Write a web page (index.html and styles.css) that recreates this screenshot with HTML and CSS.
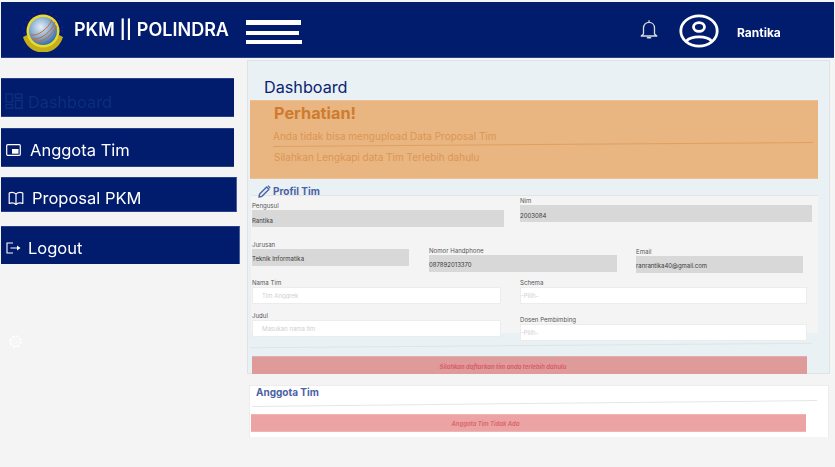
FILE: index.html
```html
<!DOCTYPE html>
<html lang="id">
<head>
<meta charset="utf-8">
<title>PKM Polindra</title>
<link rel="stylesheet" href="styles.css">
</head>
<body>
<header class="topbar">
  <svg class="logo" viewBox="0 0 42 42" aria-hidden="true">
    <defs>
      <radialGradient id="globe" cx="0.42" cy="0.36" r="0.68">
        <stop offset="0" stop-color="#e6eef6"/>
        <stop offset="0.5" stop-color="#8fb2d6"/>
        <stop offset="1" stop-color="#2f66a8"/>
      </radialGradient>
    </defs>
    <circle cx="21" cy="20" r="19" fill="#07176a" stroke="#0a1f86" stroke-width="2" stroke-dasharray="3 3"/>
    <path d="M1 27 L5 25 C10 36 32 36 37 25 L41 27 C38 37 30 42.500 21 42.500 C12 42.500 4 37 1 27 Z" fill="#c4ae1e"/>
    <circle cx="21" cy="21" r="16.500" fill="#e8dc2a"/>
    <circle cx="21" cy="21" r="14" fill="url(#globe)"/>
    <path d="M10 29 C18 30 29 23 33 12 M13 32 C21 32 31 25 34.500 16 M9 25 C16 26 25 20 30 10" fill="none" stroke="#c96a2c" stroke-width="1"/>
  </svg>
  <span class="brand">PKM || POLINDRA</span>
  <div class="burger" aria-hidden="true"><i class="b1"></i><i class="b2"></i><i class="b3"></i></div>
  <svg class="bell" viewBox="0 0 18 21" aria-hidden="true">
    <path d="M9 1.200 V3 M3.500 15 V9 C3.500 5.600 6 3.300 9 3.300 C12 3.300 14.500 5.600 14.500 9 V15 L16.800 17 H1.200 Z" fill="none" stroke="#dcdcdc" stroke-width="1.300" stroke-linejoin="round"/>
    <path d="M7.500 18.800 H10.500" stroke="#dcdcdc" stroke-width="1.600" stroke-linecap="round"/>
  </svg>
  <svg class="avatar" viewBox="0 0 40 34" aria-hidden="true">
    <ellipse cx="20" cy="17" rx="18.200" ry="15.200" fill="none" stroke="#fff" stroke-width="2.800"/>
    <ellipse cx="20" cy="13" rx="5.500" ry="4.300" fill="none" stroke="#fff" stroke-width="2.800"/>
    <path d="M7.500 27 C12 21.500 28 21.500 32.500 27" fill="none" stroke="#fff" stroke-width="2.800"/>
  </svg>
  <span class="username">Rantika</span>
</header>

<div class="layout">
  <aside class="sidebar">
    <a class="nav nav-dash">
      <svg class="ico-dash" viewBox="0 0 18 16" aria-hidden="true">
        <g fill="none" stroke="#0b2f7b" stroke-width="1.500">
          <rect x="1" y="1" width="6.500" height="8"/><rect x="10.500" y="1" width="6.500" height="4"/>
          <rect x="1" y="11.500" width="6.500" height="3.800"/><rect x="10.500" y="7.500" width="6.500" height="7.800"/>
        </g>
      </svg>
      <span class="dash-label">Dashboard</span>
    </a>
    <a class="nav nav-team">
      <svg class="ico-team" viewBox="0 0 15 12" aria-hidden="true">
        <rect x="0.700" y="0.700" width="13.600" height="10.600" rx="1" fill="none" stroke="#fff" stroke-width="1.200"/>
        <rect x="6" y="5" width="6.500" height="4.700" fill="#fff"/>
      </svg>
      <span>Anggota Tim</span>
    </a>
    <a class="nav nav-prop">
      <svg class="ico-prop" viewBox="0 0 16 14" aria-hidden="true">
        <path d="M8 2.500 C6 .8 3 .8 1.200 1.500 V12 C3 11.300 6 11.300 8 13 C10 11.300 13 11.300 14.800 12 V1.500 C13 .8 10 .8 8 2.500 Z M8 2.500 V13" fill="none" stroke="#fff" stroke-width="1.200" stroke-linejoin="round"/>
      </svg>
      <span>Proposal PKM</span>
    </a>
    <a class="nav nav-out">
      <svg class="ico-out" viewBox="0 0 15 12" aria-hidden="true">
        <path d="M7 1 H1 V11 H7 M4.500 6 H12.500" fill="none" stroke="#fff" stroke-width="1.100"/>
        <path d="M11 3.500 L14.500 6 L11 8.500 Z" fill="#fff"/>
      </svg>
      <span>Logout</span>
    </a>
    <svg class="ico-gear" viewBox="0 0 24 24" aria-hidden="true">
      <circle cx="12" cy="12" r="8.500" fill="none" stroke="#fff" stroke-width="1.800"/>
      <circle cx="12" cy="12" r="10.500" fill="none" stroke="#fff" stroke-width="2.500" stroke-dasharray="4 4.250"/>
      <circle cx="12" cy="12" r="3.500" fill="none" stroke="#fff" stroke-width="1.500"/>
    </svg>
  </aside>

  <main class="content">
    <section class="panel">
      <h1 class="page-title">Dashboard</h1>
      <div class="alert">
        <h2 class="alert-title">Perhatian!</h2>
        <p class="alert-line first">Anda tidak bisa mengupload Data Proposal Tim</p>
        <hr class="alert-rule">
        <p class="alert-line second">Silahkan Lengkapi data Tim Terlebih dahulu</p>
      </div>
      <div class="profile-head">
        <svg class="ico-pen" viewBox="0 0 14 14" aria-hidden="true">
          <path d="M1 13 L1.800 9.700 L9.300 2.200 L11.800 4.700 L4.300 12.200 Z" fill="none" stroke="#4a62a6" stroke-width="1.500" stroke-linejoin="round"/>
          <path d="M10.300 1.200 L11.300 .4 L13.600 2.700 L12.800 3.700 Z" fill="#4a62a6"/>
        </svg>
        <h3 class="section-title">Profil Tim</h3>
      </div>
      <form class="form">
        <div class="row row-1">
          <div class="field f-pengusul"><label class="lbl">Pengusul</label><div class="val val-up">Rantika</div></div>
          <div class="field f-nim"><label class="lbl">Nim</label><div class="val val-up">2003084</div></div>
        </div>
        <div class="row row-2">
          <div class="field f-jurusan"><label class="lbl">Jurusan</label><div class="val">Teknik Informatika</div></div>
          <div class="field f-hp"><label class="lbl">Nomor Handphone</label><div class="val">087892013370</div></div>
          <div class="field f-email"><label class="lbl">Email</label><div class="val">ranrantika40@gmail.com</div></div>
        </div>
        <div class="row row-3">
          <div class="field f-left"><label class="lbl">Nama Tim</label><input class="inp" placeholder="Tim Anggrek"></div>
          <div class="field f-right"><label class="lbl">Schema</label><input class="inp inp-sel" placeholder="-Pilih-"></div>
        </div>
        <div class="row row-4">
          <div class="field f-left"><label class="lbl">Judul</label><input class="inp" placeholder="Masukan nama tim"></div>
          <div class="field f-right f-dosen"><label class="lbl">Dosen Pembimbing</label><input class="inp inp-sel" placeholder="-Pilih-"></div>
        </div>
      </form>
      <hr class="form-rule">
      <div class="warn warn-form">Silahkan daftarkan tim anda terlebih dahulu</div>
    </section>

    <section class="members">
      <h3 class="section-title members-title">Anggota Tim</h3>
      <hr class="members-rule">
      <div class="warn warn-members">Anggota Tim Tidak Ada</div>
    </section>
  </main>
</div>
</body>
</html>
```

FILE: styles.css
```css
* { box-sizing: border-box; }
html, body { margin: 0; padding: 0; }
body {
  background: #f4f4f4;
  font-family: Inter, "Liberation Sans", sans-serif;
  overflow: hidden;
  height: 467px;
}
.topbar, .layout { filter: blur(0.35px); }

/* top bar */
.topbar {
  display: flex;
  align-items: center;
  height: 56px;
  width: 833px;
  margin: 2px 0 0 1px;
  background: #011b6d;
  border: 1px solid #27408a;
  border-width: 0 0 1px 0;
  color: #fff;
}
.logo { width: 42px; height: 42px; margin-left: 21px; margin-top: 3px; flex: none; }
.brand { margin-left: 10px; font-size: 18px; font-weight: 600; white-space: nowrap; width: 172px; }
.burger { display: flex; flex-direction: column; width: 57px; margin-top: 4px; }
.burger i { display: block; background: #fff; }
.b1 { width: 55px; height: 5px; }
.b2 { width: 53px; height: 4px; margin-top: 6px; }
.b3 { width: 56px; height: 4px; margin-top: 5px; }
.bell { width: 18px; height: 21px; margin-left: 337px; margin-top: -1px; flex: none; }
.avatar { width: 40px; height: 34px; margin-left: 21px; flex: none; margin-top: 3px; }
.username { margin-left: 18px; font-size: 12px; font-weight: 700; margin-top: 5px; }

/* layout */
.layout { display: flex; align-items: flex-start; }
.sidebar { width: 247px; flex: none; padding: 20px 0 0 1px; display: flex; flex-direction: column; }
.nav {
  display: flex;
  align-items: center;
  background: #011b6d;
  border: 1px solid #27408a;
  border-width: 1px 0;
  color: #fff;
  font-size: 16.500px;
  white-space: nowrap;
}
.nav-dash { width: 233px; height: 39px; padding: 6px 0 0 4px; color: #0b2f7b; font-size: 16.300px; }
.dash-label { margin-top: 2px; }
.nav-team { width: 233px; height: 39px; margin-top: 11px; padding: 4px 0 0 5px; }
.nav-prop { width: 236px; height: 35px; margin-top: 10px; padding: 6px 0 0 7px; border-right: 1px solid #4a5f9e; }
.nav-out { width: 239px; height: 38px; margin-top: 14px; padding: 4px 0 0 5px; border-right: 1px solid #4a5f9e; border-bottom: 0; }
.ico-dash { width: 18px; height: 16px; margin-right: 5px; flex: none; }
.ico-team { width: 15px; height: 12px; margin-right: 9px; flex: none; }
.ico-prop { width: 16px; height: 15px; margin: 2px 8px 0 0; flex: none; }
.ico-out { width: 15px; height: 12px; margin-right: 7px; flex: none; }
.ico-gear { width: 13px; height: 13px; margin: 71px 0 0 8px; flex: none; }

/* main */
.content { width: 583px; margin-top: 2px; }
.panel {
  position: relative;
  height: 314px;
  width: 583px;
  background: #e9f1f4;
  border: 1px solid #dfe3e6;
}
.page-title {
  margin: 0;
  height: 39px;
  padding: 16px 0 0 16px;
  font-size: 16.200px;
  line-height: 20px;
  font-weight: 400;
  color: #0a2472;
}
.alert {
  width: 568px;
  height: 79px;
  margin-left: 2px;
  background: #e9b581;
  border: 1px solid #ecc198;
  border-width: 1px 0;
  padding-left: 24px;
}
.alert-title { margin: 0; font-size: 16.300px; line-height: 24px; font-weight: 700; color: #cf7b2f; }
.alert-line { margin: 0; font-size: 10px; line-height: 14px; color: #dc9552; }
.alert-line.first { margin: 4px 0 0 -1px; }
.alert-line.second { margin-top: 5px; }
.alert-rule {
  width: 540px;
  height: 1px;
  border: 0;
  background: #e09f60;
  transform: rotate(-0.42deg);
  margin: 1px 0 0 -1px;
}
.profile-head { display: flex; align-items: flex-start; height: 16px; margin-left: 10px; padding-top: 6px; }
.ico-pen { width: 13px; height: 13px; margin-right: 2px; flex: none; }
.section-title { margin: 0; font-size: 10px; line-height: 12px; font-weight: 700; color: #4a62a6; }

.form { width: 567px; height: 138px; margin-left: 3px; background: #f4f4f4; border-top: 1px solid #e4e4e6; padding-left: 1px; }
.row { display: flex; align-items: flex-start; }
.lbl { display: block; height: 8px; font-size: 6.100px; line-height: 10px; margin-bottom: 1px; color: #555; white-space: nowrap; }
.val {
  height: 17px;
  background: #d8d8d8;
  font-size: 6px;
  line-height: 19px;
  color: #3a3a3a;
  white-space: nowrap;
}
.val-up { line-height: 21px; }
.inp {
  display: block;
  width: 100%;
  height: 17px;
  padding: 0 0 0 9px;
  background: #fff;
  border: 1px solid #ececec;
  outline: 0;
  font: 6px Inter, "Liberation Sans", sans-serif;
}
.inp::placeholder { color: #cfcfcf; opacity: 1; }
.inp-sel { padding-left: 0; }
.f-pengusul { width: 252px; margin-top: 5px; }
.f-nim { width: 292px; margin-left: 16px; }
.row-2 { margin-top: 13px; }
.f-jurusan { width: 157px; }
.f-hp { width: 188px; margin: 6px 0 0 20px; }
.f-email { width: 167px; margin: 7px 0 0 19px; }
.row-3 { margin-top: 5px; }
.row-4 { margin-top: 7px; }
.f-left { width: 249px; }
.f-right { width: 287px; margin-left: 19px; }
.f-dosen { margin-top: 4px; }
.form-rule {
  width: 562px;
  height: 1px;
  margin: 12px 0 0 2px;
  border: 0;
  background: #dfe4e6;
  transform: rotate(-0.45deg);
}
.warn {
  font-size: 5.900px;
  font-weight: 700;
  font-style: italic;
  text-align: center;
  white-space: nowrap;
}
.warn-form {
  width: 555px;
  height: 18px;
  margin: 10px 0 0 4px;
  padding-right: 53px;
  line-height: 19px;
  background: #df9a9a;
  border-top: 1px solid #dcb0b0;
  color: #d9606a;
}
.members {
  width: 580px;
  height: 52px;
  margin: 11px 0 0 2px;
  background: #fff;
  border: 1px solid #ececec;
  border-width: 1px 1px 0 1px;
}
.members-title { padding: 0 0 0 6px; }
.members-rule {
  width: 565px;
  height: 1px;
  margin: 5px 0 0 2px;
  border: 0;
  background: #e6e6e6;
  transform: rotate(-0.6deg);
}
.warn-members {
  width: 555px;
  height: 18px;
  margin: 10px 0 0 1px;
  padding-right: 86px;
  line-height: 17px;
  background: #eca3a3;
  border: 1px solid #f0b4b4;
  border-width: 1px 0;
  color: #db6a6e;
}
```
